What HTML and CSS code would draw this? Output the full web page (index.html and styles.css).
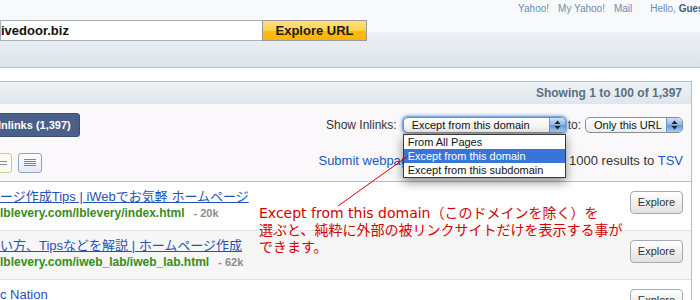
FILE: index.html
```html
<!DOCTYPE html>
<html lang="ja">
<head>
  <meta charset="UTF-8">
  <title>Site Explorer - Inlinks</title>
  <meta name="viewport" content="width=device-width, initial-scale=1.0">
  <link rel="stylesheet" href="styles.css">
</head>
<body>
  <div class="masthead">
    <div class="toplinks">
      <a href="#">Yahoo!</a>
      <a href="#">My Yahoo!</a>
      <a href="#">Mail</a>
      <span class="hello">Hello, <b>Guest</b></span>
    </div>
    <div class="search">
      <div class="url-input">ivedoor.biz</div>
      <div class="url-button">Explore URL</div>
    </div>
  </div>
  <div class="spacer"></div>

  <div class="panel">
    <div class="panel-head">Showing 1 to 100 of 1,397</div>

    <div class="controls">
      <div class="tab">Inlinks (1,397)</div>

      <div class="filter">
        <span class="filter-label">Show Inlinks:</span>
        <div class="select-wrap">
          <div class="select focused">
            <span class="select-text">Except from this domain</span>
            <span class="select-arrows">
              <svg width="7" height="10" viewBox="0 0 7 10"><path d="M3.5 0.5 L6.5 4 H0.5 Z M3.5 9.5 L6.5 6 H0.5 Z" fill="#222"/></svg>
            </span>
          </div>
          <ul class="dropdown">
            <li>From All Pages</li>
            <li class="active">Except from this domain</li>
            <li>Except from this subdomain</li>
          </ul>
        </div>
        <span class="filter-to">to:</span>
        <div class="select small">
          <span class="select-text">Only this URL</span>
          <span class="select-arrows">
            <svg width="7" height="10" viewBox="0 0 7 10"><path d="M3.5 0.5 L6.5 4 H0.5 Z M3.5 9.5 L6.5 6 H0.5 Z" fill="#222"/></svg>
          </span>
        </div>
      </div>

      <div class="views">
        <div class="view-btn compact">
          <svg width="10" height="6" viewBox="0 0 10 6"><path d="M0 1.5 H10 M0 4.5 H10" stroke="#7b8ea3" stroke-width="1"/></svg>
        </div>
        <div class="view-btn full">
          <svg width="12" height="8" viewBox="0 0 12 8"><path d="M0 0.5 H12 M0 2.5 H12 M0 4.5 H12 M0 6.5 H12" stroke="#72879e" stroke-width="1"/></svg>
        </div>
      </div>

      <div class="actions">
        <a href="#" class="submit">Submit webpage</a>
        <span class="export">Export first 1000 results to <a href="#">TSV</a></span>
      </div>
    </div>

    <ul class="results">
      <li class="row">
        <div class="entry">
          <a href="#" class="title">ージ作成Tips | iWebでお気軽 ホームページ</a>
          <div class="meta"><span class="url">lblevery.com/lblevery/index.html</span><span class="size">- 20k</span></div>
        </div>
        <div class="explore">Explore</div>
      </li>
      <li class="row alt">
        <div class="entry">
          <a href="#" class="title">い方、Tipsなどを解説 | ホームページ作成</a>
          <div class="meta"><span class="url">lblevery.com/iweb_lab/iweb_lab.html</span><span class="size">- 62k</span></div>
        </div>
        <div class="explore">Explore</div>
      </li>
      <li class="row">
        <div class="entry">
          <a href="#" class="title">c Nation</a>
          <div class="meta"><span class="url">&nbsp;</span></div>
        </div>
        <div class="explore">Explore</div>
      </li>
    </ul>
  </div>

  <div class="note">
    Except from this domain（このドメインを除く）を<br>
    選ぶと、純粋に外部の被リンクサイトだけを表示する事が<br>
    できます。
  </div>
  <svg class="note-line" width="700" height="300" viewBox="0 0 700 300">
    <line x1="338" y1="206" x2="408" y2="156" stroke="#d40000" stroke-width="1"/>
  </svg>
</body>
</html>
```

FILE: styles.css
```css
body {
  margin: 0;
  width: 700px;
  height: 300px;
  overflow: hidden;
  position: relative;
  font-family: "Liberation Sans", "Noto Sans CJK JP", sans-serif;
  background: #fff;
  color: #333;
}

a {
  text-decoration: none;
}

/* header */
.masthead {
  height: 67px;
  background: linear-gradient(#f7f9fb 0, #f7f9fb 32px, #ecf0f4 32px, #dde5eb 67px);
  border-bottom: 1px solid #b3bfc9;
}

.toplinks {
  display: flex;
  justify-content: flex-end;
  align-items: center;
  gap: 9px;
  height: 16px;
  margin-right: -7px;
  font-size: 10px;
  white-space: nowrap;
}

.toplinks a {
  color: #6c8cb0;
}

.hello {
  margin-left: 9px;
  color: #6c8cb0;
}

.hello b {
  color: #3d5d7d;
}

.search {
  display: flex;
  margin-top: 4px;
  height: 21px;
}

.url-input {
  width: 262px;
  box-sizing: border-box;
  border: 1px solid #a8b0b7;
  border-right: 0;
  background: #fff;
  font-size: 13px;
  font-weight: bold;
  line-height: 19px;
  color: #111;
}

.url-button {
  width: 105px;
  box-sizing: border-box;
  border: 1px solid #9a9a9a;
  background: linear-gradient(#ffe184, #ffd24a 50%, #ffbb12 52%, #ffb300);
  font-size: 13px;
  font-weight: bold;
  line-height: 19px;
  text-align: center;
  color: #1a1a1a;
}

.spacer {
  height: 13px;
}

/* panel */
.panel {
  margin-right: 8px;
  border-top: 1px solid #b3bfc9;
  border-right: 1px solid #b3bfc9;
}

.panel-head {
  height: 22px;
  line-height: 22px;
  padding-right: 9px;
  text-align: right;
  background: linear-gradient(#eef2f5, #dfe6ec);
  font-size: 12px;
  font-weight: bold;
  color: #5b6f83;
}

.controls {
  display: grid;
  grid-template-columns: auto 1fr;
  align-content: start;
  row-gap: 16px;
  align-items: center;
  height: 78px;
  box-sizing: border-box;
  padding: 9px 8px 0 0;
  background: #faf8fb;
  border-bottom: 1px solid #b3bfc9;
}

.tab {
  justify-self: start;
  margin-left: -11px;
  padding: 0 8px;
  height: 24px;
  box-sizing: border-box;
  line-height: 22px;
  border: 1px solid #3c4f73;
  border-radius: 3px;
  background: #4b6089;
  color: #fff;
  font-size: 11px;
  font-weight: bold;
}

.filter {
  justify-self: end;
  display: flex;
  align-items: center;
  font-size: 12px;
  color: #333;
}

.filter-label {
  margin-right: 6px;
}

.filter-to {
  margin: 0 4px 0 2px;
}

.select-wrap {
  position: relative;
}

.select {
  display: flex;
  align-items: stretch;
  width: 163px;
  height: 16px;
  box-sizing: border-box;
  border: 1px solid #8b8b8b;
  border-radius: 5px;
  background: linear-gradient(#fff, #ececec);
  font-size: 11px;
  color: #111;
}

.select.small {
  width: 98px;
}

.select.focused {
  box-shadow: 0 0 0 1px #7fa8e0, 0 0 3px 2px rgba(90, 140, 215, 0.55);
}

.select-text {
  flex: 1;
  padding-left: 8px;
  line-height: 14px;
  white-space: nowrap;
}

.select-arrows {
  width: 15px;
  display: flex;
  align-items: center;
  justify-content: center;
  border-left: 1px solid #7a93b8;
  border-radius: 0 4px 4px 0;
  background: linear-gradient(#cfe2f8, #8bb6ea 50%, #5d97e0 52%, #a6cdf5);
}

.dropdown {
  position: absolute;
  top: 17px;
  left: 0;
  z-index: 5;
  width: 163px;
  box-sizing: border-box;
  margin: 0;
  padding: 0;
  list-style: none;
  background: #fff;
  border: 1px solid #3a3a3a;
  box-shadow: 0 4px 10px rgba(0, 0, 0, 0.45);
  font-size: 11px;
  color: #111;
}

.dropdown li {
  height: 14px;
  line-height: 14px;
  padding-left: 4px;
  white-space: nowrap;
}

.dropdown li.active {
  background: #3875d7;
  color: #fff;
}

.views {
  display: flex;
  align-items: center;
}

.view-btn {
  display: flex;
  align-items: center;
  justify-content: center;
  height: 20px;
  box-sizing: border-box;
  border-radius: 3px;
}

.view-btn.compact {
  width: 26px;
  margin-left: -14px;
  padding-left: 6px;
  border: 1px solid #cbc5a0;
  background: #fcfbf2;
}

.view-btn.full {
  width: 24px;
  margin-left: 6px;
  border: 1px solid #8ea4bc;
  background: linear-gradient(#fff, #e3e9ef);
}

.actions {
  justify-self: end;
  display: flex;
  gap: 88px;
  font-size: 13px;
  color: #333;
  margin-top: -6px;
  white-space: nowrap;
}

.actions a {
  color: #1459c4;
}

/* results */
.results {
  margin: 0;
  padding: 0;
  list-style: none;
}

.row {
  display: flex;
  justify-content: space-between;
  align-items: flex-start;
  padding: 7px 8px 9px 0;
  border-bottom: 1px dotted #d0d0d0;
  background: #fff;
}

.row.alt {
  background: #f6f6f6;
}

.entry {
  white-space: nowrap;
}

.title {
  display: block;
  font-size: 13px;
  line-height: 16px;
  color: #1f51ba;
  text-decoration: underline;
}

.meta {
  font-size: 12px;
  line-height: 16px;
  font-weight: bold;
}

.url {
  color: #3a8b1c;
}

.size {
  margin-left: 9px;
  font-size: 11px;
  color: #8c8c8c;
}

.explore {
  width: 53px;
  height: 23px;
  margin-top: 2px;
  box-sizing: border-box;
  border: 1px solid #a2acb4;
  border-radius: 4px;
  background: linear-gradient(#fff, #e1e1e1);
  font-size: 11px;
  line-height: 21px;
  text-align: center;
  color: #333;
}

/* annotation */
.note {
  position: absolute;
  left: 259px;
  top: 205px;
  z-index: 6;
  font-family: "DejaVu Sans", "Noto Sans CJK JP", sans-serif;
  font-size: 14px;
  line-height: 17px;
  color: #d40000;
  white-space: nowrap;
}

.note-line {
  position: absolute;
  left: 0;
  top: 0;
  z-index: 7;
  pointer-events: none;
}
```
